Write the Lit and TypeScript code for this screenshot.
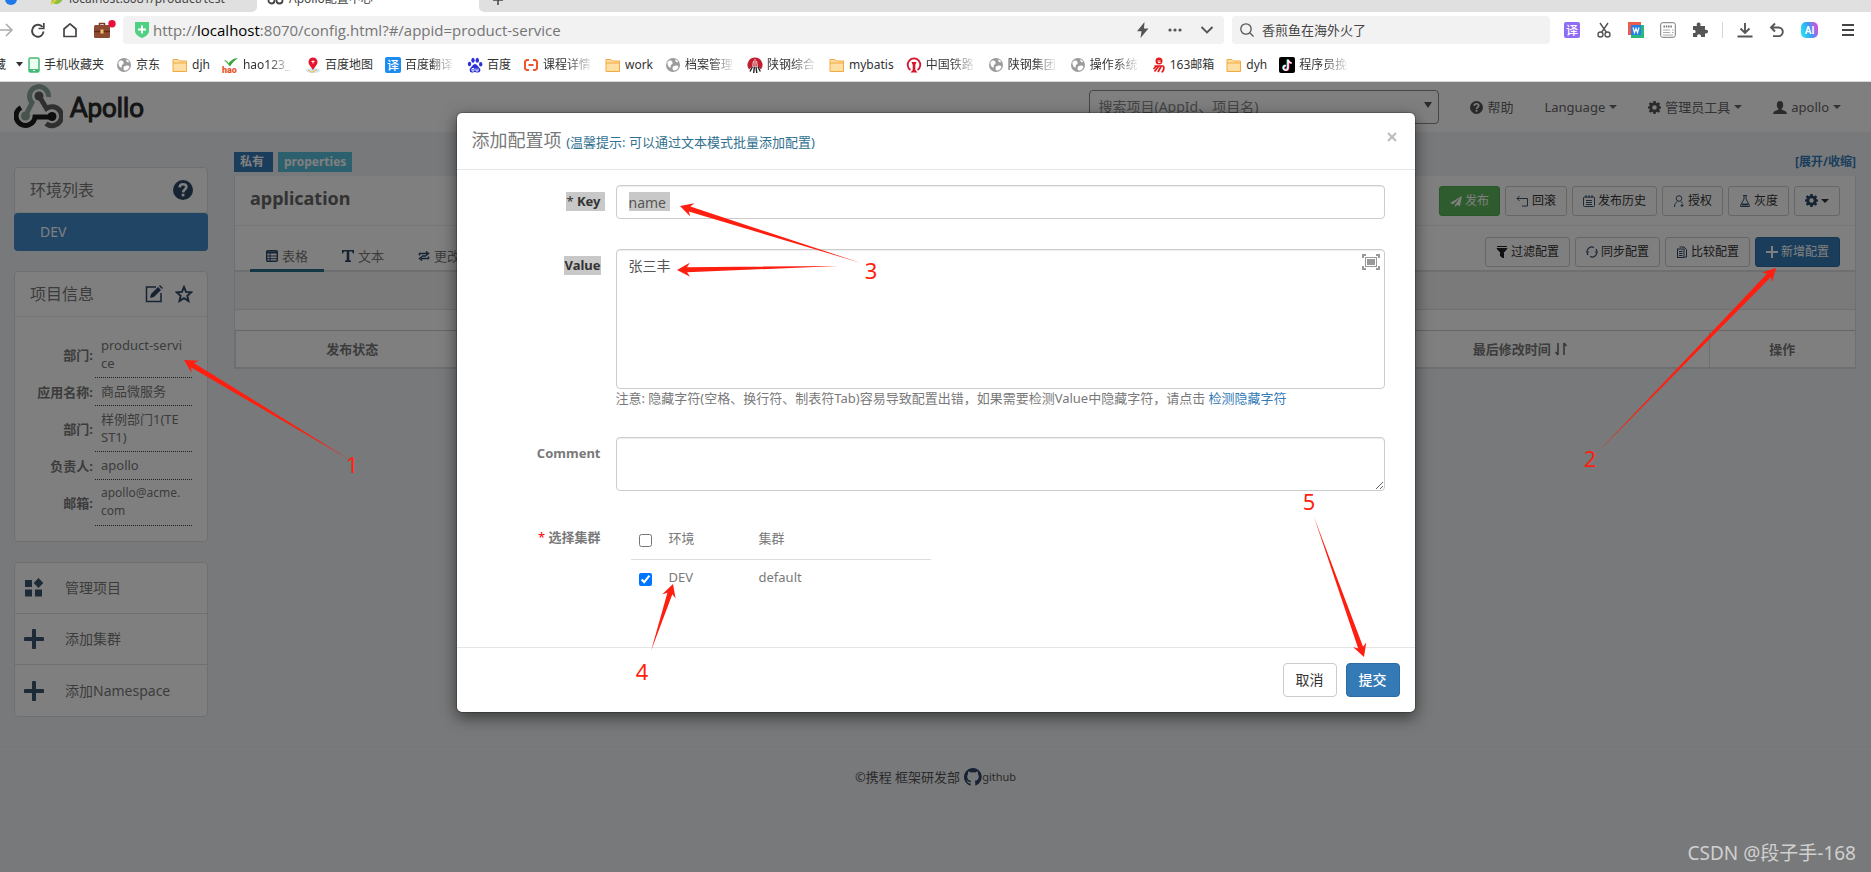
import { LitElement, html, css, svg } from "lit";
import { customElement } from "lit/decorators.js";

const base = css`
  * { box-sizing: border-box; }
  button, input, textarea, select { font: inherit; color: inherit; margin: 0; }
  button { background: none; border: 0; padding: 0; cursor: pointer; }
  a { text-decoration: none; color: inherit; }
  svg { display: block; flex: none; }
`;

/* ---------- icons ---------- */

const icon = (w: number, h: number, body: unknown, box = `0 0 ${w} ${h}`) =>
  html`<svg width=${w} height=${h} viewBox=${box} fill="none" aria-hidden="true">${body}</svg>`;

const folder = icon(16, 16, svg`<path d="M1 2.500h5l1.500 1.500H14.500v10.500H1z" fill="#ffdfa3" stroke="#f3a93c"/><path d="M1 6h13.500" stroke="#f3a93c"/>`);
const globe = icon(16, 16, svg`<circle cx="8" cy="8" r="7" fill="#9b9b9b"/><path d="M2.500 5c1.500-2.200 4.500-2 5 0s-.5 2-1.500 3 .5 2-.5 2.500S2 8.500 2.500 5zM8 9.500c2-1.500 4.800-1.500 5.300 0s-2 4-4 4-2-2.500-1.300-4zM10 2.500c1.500.3 2.700 1.200 3.200 2.500-1 .8-2.700.3-3.200-2.500z" fill="#fff"/>`);
const phone = icon(12, 16, svg`<rect x="1" y="1" width="10" height="14" rx="1.500" fill="#eafff0" stroke="#45b976" stroke-width="1.500"/><path d="M1 12h10v3H1z" fill="#45b976"/><path d="M5 13.500h2" stroke="#fff"/>`);
const hao = icon(17, 16, svg`<path d="M2 3c2 0 3.500 1.500 4.500 3.500C8 4 12 1 16 1c-3 2-6 5-8 8.500C6 7 4 5 2 3z" fill="#3aa537"/><text x="0" y="16" font-family="Roboto" font-weight="900" font-size="9" fill="#e8562a">hao</text>`);
const pin = icon(16, 16, svg`<ellipse cx="8" cy="13.500" rx="7" ry="2.500" fill="#cfe6f5"/><path d="M3 13l4 2.500 5-3" stroke="#f3b93c"/><path d="M8 13.500C7 10 3.500 8.500 3.500 5a4.500 4.500 0 019 0C12.500 8.500 9 10 8 13.500z" fill="#e8142c"/><path d="M6.500 4.500h3M8 3.500v3" stroke="#fff"/>`);
const yi = (w: number, c: string) => icon(w, 16, svg`<rect width=${w} height="16" rx="2" fill=${c}/><text x=${w / 2} y="12.500" text-anchor="middle" font-family="Noto Sans CJK SC" font-weight="500" font-size="12" fill="#fff">译</text>`);
const paw = icon(16, 16, svg`<g fill="#2a32d8"><ellipse cx="2.500" cy="7" rx="1.700" ry="2.300"/><ellipse cx="6" cy="3.200" rx="1.700" ry="2.500"/><ellipse cx="10.300" cy="3.200" rx="1.700" ry="2.500"/><ellipse cx="13.700" cy="7.200" rx="1.700" ry="2.300"/><path d="M8 7c2 0 3 2.500 4.500 4S13.500 15.500 11 15.500 9 15 8 15s-1 .5-3.200.5S2 12.500 3.500 11 6 7 8 7z"/></g><path d="M5 11.500h2v2.500H5zM9 11.500V14h2v-2.500" stroke="#fff" stroke-width=".9"/>`);
const bracket = icon(16, 16, svg`<path d="M6 3H3.500L2 4.500v7L3.500 13H6M10 3h2.500L14 4.500v7L12.500 13H10M5.500 8h5" stroke="#f0562b" stroke-width="2"/>`);
const mill = icon(16, 16, svg`<path d="M8 .5a7.500 7.500 0 016 12L10.500 9 8 10 5.500 9 2 12.500A7.500 7.500 0 018 .5z" fill="#c21f2e"/><path d="M8 2v8M6.500 4l-1 6M9.500 4l1 6" stroke="#fff" stroke-width=".8"/><path d="M7.300 10l-.6 6M9 10l.8 6M5.500 9.500L3 14.500M10.800 9.500l2.500 5" stroke="#222" stroke-width="1.400"/>`);
const rail = icon(16, 16, svg`<path d="M4.500 13A6.300 6.300 0 1111.500 13" stroke="#d7142c" stroke-width="1.800"/><path d="M5.500 5h5L9.300 8v5l2.200 2.500h-7L6.700 13V8z" fill="#d7142c"/>`);
const yi163 = icon(14, 16, svg`<circle cx="7" cy="4" r="3.500" fill="#e21a1a"/><path d="M5.500 4h3M6 5.500h2.500" stroke="#fff"/><path d="M2.500 9h8.500c1.500 0 1 5.500-1.500 6M5 8.500L1.500 12M6.500 9.500l-4 5M9 9.500l-3 5.500" stroke="#e21a1a" stroke-width="1.700"/>`);
const tik = icon(16, 16, svg`<rect width="16" height="16" rx="2" fill="#000"/><path d="M8.500 2.500v8a2.200 2.200 0 11-2.200-2.200" stroke="#25f4ee" stroke-width="1.800"/><path d="M9.500 3v8a2.200 2.200 0 11-2.200-2.200M9.500 3c.3 2 1.500 3 3.500 3.200" stroke="#fe2c55" stroke-width="1.800"/><path d="M9 2.500v8.300a2.300 2.300 0 11-2.200-2.200M9 2.500c.3 2 1.500 3.200 3.500 3.400" stroke="#fff" stroke-width="1.500"/>`);

const gear = (s: number, c: string) => icon(s, s, svg`<path fill=${c} fill-rule="evenodd" d="M6.600 0h2.800l.4 2.200 1.300.5L13 1.500l2 2-1.300 1.800.5 1.300 1.800.3v2.200l-1.800.4-.5 1.300L15 12.600l-2 2-1.900-1.300-1.300.5-.4 2.200H6.600l-.4-2.200-1.300-.5L3 14.600l-2-2 1.300-1.900-.5-1.300L0 9.100V6.900l1.800-.3.5-1.300L1 3.500l2-2 1.900 1.200 1.300-.5zM8 5.200a2.800 2.800 0 100 5.600 2.800 2.800 0 000-5.600z"/>`, "0 0 16 16");
const help = (s: number, c: string, m: string) => icon(s, s, svg`<circle cx="10" cy="10" r="10" fill=${c}/><path d="M6.600 7.400C6.800 5 8.300 4.200 10.100 4.200c2 0 3.300 1.200 3.300 2.900 0 2.500-3.200 2.300-3.300 5.300" stroke=${m} stroke-width="2.600"/><rect x="8.700" y="13.700" width="2.700" height="2.700" fill=${m}/>`, "0 0 20 20");
const caret = html`<svg width="8" height="4" viewBox="0 0 8 4" aria-hidden="true"><path d="M0 0h8L4 4z" fill="currentColor"/></svg>`;

/* ---------- browser frame ---------- */

const bookmarks: [unknown, string, boolean?][] = [
  [phone, "手机收藏夹"], [globe, "京东"], [folder, "djh"], [hao, "hao123_", true], [pin, "百度地图"],
  [yi(16, "#1c8cf0"), "百度翻译", true], [paw, "百度"], [bracket, "课程详情", true], [folder, "work"],
  [globe, "档案管理", true], [mill, "陕钢综合", true], [folder, "mybatis"], [rail, "中国铁路", true],
  [globe, "陕钢集团", true], [globe, "操作系统", true], [yi163, "163邮箱"], [folder, "dyh"], [tik, "程序员挽", true],
];

@customElement("browser-chrome")
class BrowserChrome extends LitElement {
  static styles = [base, css`
    :host { display: block; background: #fff; border-bottom: 1px solid #d9d9d9; color: #333; font-size: 12px; }
    .tabs { display: flex; height: 12px; background: #fff; overflow: hidden; }
    .tab { display: flex; align-items: flex-end; height: 12px; background: #e0e0e0; font-size: 12px; line-height: 17px; gap: 5px; white-space: nowrap; color: #444; }
    .tab svg { margin-bottom: 7px; }
    .tab span { margin-bottom: 5px; }
    .first { width: 257px; padding-left: 5px; border-bottom-right-radius: 5px; }
    .first .leaf { margin-left: 28px; }
    .active { width: 222px; background: #fff; padding-left: 10px; }
    .rest { flex: 1; border-bottom-left-radius: 5px; padding-left: 14px; }
    .bar { display: flex; align-items: center; height: 36px; padding: 0 15px 0 0; }
    .nav { display: flex; align-items: center; width: 123px; gap: 16px; }
    .url, .search { display: flex; align-items: center; height: 28px; background: #f2f2f2; border-radius: 4px; }
    .url { flex: 1; padding: 0 10px 0 12px; gap: 4px; }
    .addr { flex: 1; font-family: "Open Sans", sans-serif; font-size: 15px; color: #757575; }
    .addr b { font-weight: 400; color: #000; }
    .acts { display: flex; align-items: center; gap: 18px; }
    .search { flex: none; width: 318px; margin-left: 8px; padding: 0 8px; gap: 8px; }
    .search input { flex: 1; min-width: 0; border: 0; background: none; outline: 0; font-size: 13px; padding: 0; color: #444; }
    .search input::placeholder { color: #444; opacity: 1; }
    .ext { display: flex; align-items: center; gap: 16px; padding-left: 14px; }
    .rule { width: 1px; height: 16px; background: #d5d5d5; margin: 0 -2px; }
    .ext .menu { margin-left: 6px; }
    .marks { display: flex; align-items: center; height: 33px; gap: 12px; line-height: 16px; white-space: nowrap; overflow: hidden; }
    .lead { display: flex; align-items: center; gap: 10px; margin-right: -8px; }
    .lead span { display: flex; justify-content: flex-end; width: 6px; overflow: hidden; }
    .mark { display: flex; align-items: center; gap: 4px; flex: none; }
    .fade { width: 50px; overflow: hidden; mask-image: linear-gradient(90deg, #000 50%, transparent 100%); }
  `];

  render() {
    const s = "#555";
    return html`
      <div class="tabs">
        <div class="tab first">
          ${icon(12, 12, svg`<circle cx="6" cy="6" r="6" fill="#2178e8"/>`)}
          <svg class="leaf" width="14" height="12" viewBox="0 0 14 12" aria-hidden="true"><path d="M1 9C4 3 9 0 14 0c0 7-4 12-9 11z" fill="#8bbf3f"/><path d="M1 11l8-7" stroke="#e3cf3a" stroke-width="2"/></svg>
          <span>localhost:8081/product/test</span>
        </div>
        <div class="tab active">
          ${icon(17, 12, svg`<circle cx="4.500" cy="7.500" r="3" stroke="#444" stroke-width="1.800"/><circle cx="12.500" cy="7.500" r="3" stroke="#444" stroke-width="1.800"/>`)}
          <span>Apollo配置中心</span>
        </div>
        <div class="tab rest">${icon(10, 10, svg`<path d="M5 0v10M0 5h10" stroke="#444" stroke-width="1.500"/>`)}</div>
      </div>
      <div class="bar">
        <div class="nav">
          ${icon(14, 16, svg`<path d="M0 8h12M6 2l6 6-6 6" stroke="#aaa" stroke-width="1.500"/>`)}
          ${icon(16, 16, svg`<path d="M13.500 9.500A5.700 5.700 0 112.500 7 5.700 5.700 0 0112.500 5" stroke="#444" stroke-width="1.900"/><path d="M13.800 1v5.500H8.500" stroke="#444" stroke-width="1.700"/>`)}
          ${icon(16, 16, svg`<path d="M2 7l6-5.200L14 7v7.500H2z" stroke="#444" stroke-width="1.700" stroke-linejoin="round"/>`)}
          ${icon(22, 20, svg`<path d="M5.500 5.500V3.500h5v2" stroke="#7a3b26" stroke-width="1.500"/><rect x="0" y="5" width="16" height="13" rx="1.500" fill="#8d4a33"/><path d="M0 11.500h16" stroke="#5d2a1c" stroke-width="1.500"/><rect x="6.500" y="9.500" width="3" height="4" fill="#f0c36b"/><circle cx="18" cy="3.700" r="3.700" fill="#e9103a"/>`)}
        </div>
        <div class="url">
          ${icon(14, 16, svg`<path d="M0 0h14v9c0 3.500-3.500 5.500-7 7-3.500-1.500-7-3.500-7-7z" fill="#4fd183"/><path d="M7 3.500v8M3 7.500h8" stroke="#fff" stroke-width="2"/>`)}
          <span class="addr">http://<b>localhost</b>:8070/config.html?#/appid=product-service</span>
          <div class="acts">
            ${icon(14, 16, svg`<path d="M8.500 0L1 9.200h4.500L4.500 16 12.500 6.500H8z" fill=${s}/>`)}
            ${icon(14, 4, svg`<circle cx="2" cy="2" r="1.600" fill=${s}/><circle cx="7" cy="2" r="1.600" fill=${s}/><circle cx="12" cy="2" r="1.600" fill=${s}/>`)}
            ${icon(14, 8, svg`<path d="M1.500 1l5.500 5.500L12.500 1" stroke=${s} stroke-width="1.900"/>`)}
          </div>
        </div>
        <label class="search">
          ${icon(14, 14, svg`<circle cx="6" cy="6" r="5.200" stroke="#555" stroke-width="1.300"/><path d="M10 10l3.500 3.500" stroke="#555" stroke-width="1.300"/>`)}
          <input aria-label="搜索" placeholder="香煎鱼在海外火了" />
        </label>
        <div class="ext">
          ${yi(16, "#8f6cf5")}
          ${icon(16, 16, svg`<circle cx="4.500" cy="12.500" r="2.500" stroke=${s} stroke-width="1.400"/><circle cx="11.500" cy="12.500" r="2.500" stroke=${s} stroke-width="1.400"/><path d="M4 1l6.500 9.500M12 1L5.500 10.500" stroke=${s} stroke-width="1.400"/>`)}
          ${icon(16, 16, svg`<path d="M0 0h13v13H0z" fill="#ea5d4b"/><path d="M3 3h13v13H3z" fill="#27b77c"/><path d="M3 3h10v10H3z" fill="#2680eb"/><path d="M5 5.500l1.500 5L8 6.500l1.500 4 1.500-5" stroke="#fff" stroke-width="1.200"/>`)}
          ${icon(16, 16, svg`<rect x=".7" y=".7" width="14.600" height="14.600" rx="2" stroke="#777"/><path d="M3.500 4.500h9" stroke="#777" stroke-width="2" stroke-dasharray="1.500 .8"/><path d="M3 8h7M3 10.500h7M3 13h10M12 8h1.500M12 10.500h1.500" stroke="#aaa"/>`)}
          ${icon(16, 16, svg`<path d="M1 4h4c-.8-2 0-3.500 1.700-3.500S9 2 8.300 4H13v4c2-.7 3 .2 3 1.600s-1 2.400-3 1.600V15H9c.3-1.800-.7-2.700-2-2.700S4.800 13.200 5.200 15H1v-4c2 .4 2.600-.4 2.600-1.500S3 7.700 1 8z" fill=${s}/>`)}
          <span class="rule"></span>
          ${icon(16, 16, svg`<path d="M8 1v9.500M3.500 6.500L8 11l4.500-4.500M.5 14.500h15" stroke=${s} stroke-width="1.900"/>`)}
          ${icon(16, 16, svg`<path d="M6 1.500L2 5.500l4 4M2 5.500h7.500a4.300 4.300 0 010 8.600H4" stroke=${s} stroke-width="1.900"/>`)}
          <svg width="17" height="16" viewBox="0 0 17 16" aria-hidden="true"><defs><linearGradient id="ai" x1="0" y1=".6" x2="1" y2=".3"><stop offset="0" stop-color="#24e0f0"/><stop offset=".5" stop-color="#3a9df5"/><stop offset="1" stop-color="#e04ad8"/></linearGradient></defs><rect width="17" height="16" rx="5" fill="url(#ai)"/><text x="8.500" y="12" font-family="Roboto" font-weight="700" font-size="10" text-anchor="middle" fill="#fff">AI</text></svg>
          <svg class="menu" width="16" height="14" viewBox="0 0 16 14" aria-hidden="true"><path d="M2 2h12M2 7h12M2 12h12" stroke="#444" stroke-width="1.800"/></svg>
        </div>
      </div>
      <nav class="marks">
        <a class="lead" href="#"><span>藏</span>${icon(8, 5, svg`<path d="M0 0h7L3.500 4.500z" fill="#333"/>`)}</a>
        ${bookmarks.map(([i, t, f]) => html`<a class="mark" href="#">${i}<span class=${f ? "fade" : ""}>${t}</span></a>`)}
      </nav>`;
  }
}

/* ---------- portal page behind the dialog ---------- */

@customElement("portal-page")
class PortalPage extends LitElement {
  static styles = [base, css`
    :host { display: block; background: #f1f2f5; color: #797979; font-size: 13px; line-height: 18px; }
    .top { display: flex; align-items: center; height: 50px; background: #fff; padding: 0 30px 0 14px; gap: 31px; border-radius: 0 0 3px 3px; }
    .brand { display: flex; align-items: center; gap: 7px; flex: 1; font-family: Lato, sans-serif; font-size: 26px; line-height: 32px; color: #2a2a2a; -webkit-text-stroke: 1px #2a2a2a; }
    .find { display: flex; align-items: center; width: 350px; height: 34px; border: 1px solid #8a8a8a; border-radius: 4px; padding: 0 6px 0 8px; }
    .find svg { margin-bottom: 5px; }
    .find input { flex: 1; border: 0; outline: 0; background: none; font-size: 14px; padding: 0; }
    .find input::placeholder { color: #8a8a8a; opacity: 1; }
    .link { display: flex; align-items: center; gap: 4px; color: #666; }
    .body { display: grid; grid-template-columns: 194px minmax(0, 1fr); gap: 26px; padding: 20px 15px 0 14px; align-items: start; }
    .side { display: grid; gap: 20px; padding-top: 15px; }
    .panel { background: #fff; border: 1px solid #dcdfe3; border-radius: 4px; }
    .head { display: flex; align-items: center; gap: 12px; height: 45px; padding: 0 14px 0 15px; border-bottom: 1px solid #e9ebee; font-size: 16px; color: #797979; }
    .head span { flex: 1; }
    .env { display: block; margin: 0 -1px -1px; height: 38px; line-height: 38px; padding-left: 26px; border-radius: 4px; background: #428bca; color: #fff; font-size: 14px; }
    .info { width: 100%; border-collapse: collapse; table-layout: fixed; }
    .wrap { padding: 15px 15px 15px 14px; }
    .info th { width: 66px; text-align: right; padding: 5px 2px 5px 0; white-space: nowrap; color: #797979; }
    .info td { padding: 4px 8px 5px 6px; word-break: break-all; border-bottom: 1px dotted #444; }
    .info tr:last-child td { font-size: 12px; }
    .menu a { display: flex; align-items: center; gap: 21px; height: 51px; padding-left: 9px; font-size: 14px; border-bottom: 1px solid #dcdfe3; }
    .menu a:last-child { border-bottom: 0; }
    .line { display: flex; align-items: center; height: 24px; gap: 5px; padding-bottom: 4px; font-size: 12px; font-weight: 700; }
    .tag { height: 20px; line-height: 20px; padding: 0 9px 0 6px; background: #337ab7; color: #fff; }
    .tag.cyan { background: #5bc0de; padding: 0 6px; }
    .toggle { margin-left: auto; color: #337ab7; }
    .box { background: #fff; border: 1px solid #dcdfe3; border-top: 0; border-bottom-width: 2px; }
    .row { display: flex; align-items: center; justify-content: space-between; padding: 0 15px; }
    .title { height: 50px; border-bottom: 1px solid #eceef0; }
    .title h2 { margin: 0 0 5px; font-size: 18px; line-height: 24px; color: #666; }
    .btns { display: flex; gap: 5px; }
    .btn { display: flex; align-items: center; gap: 3px; height: 30px; padding: 0 10px; border: 1px solid #ccc; border-radius: 3px; font-size: 12px; color: #333; background: #fff; }
    .green { background: #5cb85c; border-color: #4cae4c; color: #fff; }
    .blue { background: #337ab7; border-color: #2e6da4; color: #fff; }
    .bar { height: 46px; border-bottom: 2px solid #dcdfe3; align-items: flex-start; }
    .bar .btns { padding-top: 11px; }
    .tabs { display: flex; gap: 2px; height: 46px; align-items: flex-end; }
    .tab { display: flex; align-items: center; gap: 4px; height: 30px; padding: 0 16px; border-bottom: 3px solid transparent; }
    .tab.on { border-color: #2b6f86; }
    .strip { height: 38px; background: #f5f5f5; border-bottom: 1px solid #dcdfe3; margin-bottom: 20px; }
    .list { width: 100%; border-collapse: collapse; table-layout: fixed; border-top: 1px solid #ccc; }
    .list th { height: 36px; padding: 0; text-align: center; border-left: 1px solid #dcdfe3; }
    .list th:first-child { width: 233px; }
    .list th:nth-child(3) { width: 378px; }
    .list th:nth-child(2), .list th:nth-child(3) { border-left: 0; }
    .list th:last-child { width: 146px; }
    .sort { display: inline-block; vertical-align: -2px; margin-left: 4px; }
    .foot { display: flex; align-items: center; justify-content: center; gap: 4px; margin-top: 29px; padding-top: 17px; height: 44px; border-top: 1px solid #ebedf0; color: #555; }
    .foot a { display: flex; align-items: center; font-size: 11px; }
  `];

  render() {
    const d = "#3b5470";
    const n = "#2c4766";
    const plus = icon(20, 20, svg`<path d="M10 1.500v17M1.500 10h17" stroke=${d} stroke-width="4" stroke-linecap="round"/>`);
    const info: [string, string][] = [
      ["部门:", "product-service"], ["应用名称:", "商品微服务"], ["部门:", "样例部门1(TEST1)"], ["负责人:", "apollo"], ["邮箱:", "apollo@acme.com"],
    ];
    return html`
      <header class="top">
        <a class="brand" href="#">
          ${icon(49, 46, svg`
            <g stroke-width="5">
              <path d="M34.500 13A9.500 9.500 0 1018 18.500L11.500 32" stroke="#8da99b"/>
              <path d="M25 12L32.500 24.500A9.500 9.500 0 1132 39.500" stroke="#5e5e5e"/>
              <path d="M7 23.600A9.500 9.500 0 1021 33H38" stroke="#1c1c1c"/>
            </g>
            <circle cx="25" cy="12" r="4.500" fill="#5e5e5e"/><circle cx="11.500" cy="32" r="4.500" fill="#8da99b"/><circle cx="38" cy="32.500" r="4.500" fill="#1c1c1c"/>`)}
          <span>Apollo</span>
        </a>
        <label class="find"><input aria-label="搜索项目" placeholder="搜索项目(AppId、项目名)" />${icon(8, 6, svg`<path d="M0 0h8L4 6z" fill="#555"/>`)}</label>
        <a class="link" href="#">${help(13, "#555", "#fff")}帮助</a>
        <a class="link" href="#">Language${caret}</a>
        <a class="link" href="#">${gear(13, "#555")}管理员工具 ${caret}</a>
        <a class="link" href="#">${icon(14, 13, svg`<ellipse cx="7" cy="4" rx="3.200" ry="4" fill="#555"/><path d="M5.500 6h3v2.500l4.500 2 1 2.500H0l1-2.500 4.500-2z" fill="#555"/>`)}apollo ${caret}</a>
      </header>
      <div class="body">
        <aside class="side">
          <section class="panel">
            <div class="head"><span>环境列表</span>${help(20, n, "#fff")}</div>
            <a class="env" href="#">DEV</a>
          </section>
          <section class="panel">
            <div class="head"><span>项目信息</span>
              ${icon(18, 18, svg`<path d="M11 2H1.500v14.500H16V8" stroke=${n} stroke-width="1.500"/><path d="M5 13l1-4 7-7 3 3-7 7z" fill=${n}/><path d="M14 1l1-1 3 3-1 1z" fill=${n}/>`)}
              ${icon(18, 18, svg`<path d="M9 2l2 4.900 5.300.4-4 3.500 1.200 5.200L9 13.200 4.500 16l1.200-5.200-4-3.500L7 6.900z" stroke=${n} stroke-width="1.900"/>`)}
            </div>
            <div class="wrap"><table class="info">${info.map(([k, v]) => html`<tr><th>${k}</th><td>${v}</td></tr>`)}</table></div>
          </section>
          <nav class="panel menu">
            <a href="#">${icon(20, 20, svg`<path d="M1 2h7v7H1zM1 11.500h7v7H1zM11 11.500h7v7h-7zM14.500 0l4.800 5-4.800 5-4.800-5z" fill=${d}/>`)}管理项目</a>
            <a href="#">${plus}添加集群</a>
            <a href="#">${plus}添加Namespace</a>
          </nav>
        </aside>
        <main>
          <div class="line"><span class="tag">私有</span><span class="tag cyan">properties</span><a class="toggle" href="#">[展开/收缩]</a></div>
          <section class="box">
            <div class="row title"><h2>application</h2>
              <div class="btns">
                <button class="btn green">${icon(12, 12, svg`<path d="M12 1L0 8l3 1.200L10 3 5 10v2l2-2 3 1z" fill="#fff"/>`)}发布</button>
                <button class="btn">${icon(13, 12, svg`<path d="M1 3.500h10.500V11H6M3.500 1L1 3.500 3.500 6" stroke=${d}/>`)}回滚</button>
                <button class="btn">${icon(12, 12, svg`<rect x=".5" y="2" width="11" height="9.500" rx="1" stroke=${d}/><path d="M3 0v3M6 0v3M9 0v3M3 5.500h6M3 7.500h6M3 9.500h6" stroke=${d}/>`)}发布历史</button>
                <button class="btn">${icon(12, 12, svg`<circle cx="6" cy="3.500" r="2.800" stroke=${d}/><path d="M1.500 12c0-3 1.500-4.500 3-5.700M8 6.500l1.500 2M7.500 10.500h3M9 9v3" stroke=${d}/>`)}授权</button>
                <button class="btn">${icon(12, 12, svg`<path d="M4 .5h4M5 .5V4L1.500 10.500v1h9v-1L7 4V.5" stroke=${d}/><path d="M2.500 8.500h7v2h-7z" fill=${d}/>`)}灰度</button>
                <button class="btn" aria-label="设置">${gear(13, n)}${caret}</button>
              </div>
            </div>
            <div class="row bar">
              <div class="tabs">
                <a class="tab on" href="#">${icon(12, 12, svg`<rect x=".7" y=".7" width="10.600" height="10.600" rx="1" stroke=${n} stroke-width="1.400"/><path d="M1 2.500h10" stroke=${n} stroke-width="2"/><path d="M1 6h10M1 8.700h10M4 3v8" stroke=${n}/>`)}表格</a>
                <a class="tab" href="#">${icon(12, 12, svg`<path d="M0 0h12v3.500h-1L10 1.500H7.300V10l1.700.8V12H3v-1.200L4.700 10V1.500H2L1 3.500H0z" fill=${n}/>`)}文本</a>
                <a class="tab" href="#">${icon(12, 12, svg`<path d="M1.500 5.500V3.500H9M8 1.500l2.500 2L8 5.500M10.500 6.500v2H3M4 6.500l-2.500 2 2.500 2M4 6h4" stroke=${n} stroke-width="1.500"/>`)}更改历史</a>
              </div>
              <div class="btns">
                <button class="btn">${icon(12, 12, svg`<path d="M1 .5h10M1 2.500h10L7.500 6.500V12L4.500 10V6.500z" fill="#222" stroke="#222"/>`)}过滤配置</button>
                <button class="btn">${icon(12, 12, svg`<path d="M2.200 9A4.800 4.800 0 018 1.600M9.800 3A4.800 4.800 0 014 10.400" stroke=${d} stroke-width="1.200"/><path d="M10.800 6h-2M1.200 6h2" stroke=${d}/>`)}同步配置</button>
                <button class="btn">${icon(12, 12, svg`<rect x="1.500" y="3" width="6.500" height="8.500" stroke=${n}/><path d="M3.500 1h4.500L10.500 3.500V11H8.500M3 5.500h3.500M3 7.500h3.500M3 9.500h3.500" stroke=${n}/>`)}比较配置</button>
                <button class="btn blue">${icon(12, 12, svg`<path d="M6 0v12M0 6h12" stroke="#fff" stroke-width="2"/>`)}新增配置</button>
              </div>
            </div>
            <div class="strip"></div>
            <table class="list"><tr>
              <th>发布状态</th><th></th>
              <th>最后修改时间<svg class="sort" width="12" height="14" viewBox="0 0 12 14" fill="none" aria-hidden="true"><path d="M3 1v12M.5 10L3 13M9 13V1M9 1l2.500 3" stroke="#666" stroke-width="1.500"/></svg></th>
              <th>操作</th>
            </tr></table>
          </section>
        </main>
      </div>
      <footer class="foot"><span>©携程 框架研发部</span>
        <a href="#">${icon(18, 18, svg`<path fill=${n} d="M8 0C3.600 0 0 3.600 0 8c0 3.500 2.300 6.500 5.500 7.600.4.100.5-.2.500-.4v-1.500c-2.200.5-2.700-1-2.700-1-.4-1-.9-1.200-.9-1.200-.7-.5.1-.5.1-.5.800.1 1.200.8 1.200.8.700 1.200 1.900.9 2.300.7.100-.5.300-.9.500-1.100-1.800-.2-3.600-.9-3.600-4 0-.9.300-1.600.8-2.100 0-.2-.3-1 .1-2.100 0 0 .7-.2 2.200.8a7.500 7.500 0 014 0c1.500-1 2.200-.8 2.200-.8.400 1.100.1 1.900.1 2.100.5.600.8 1.300.8 2.200 0 3.100-1.900 3.700-3.700 3.900.3.300.6.800.6 1.500v2.200c0 .2.100.5.500.4A8 8 0 008 0z"/>`, "0 0 16 16")}github</a>
      </footer>`;
  }
}

/* ---------- "add item" dialog ---------- */

@customElement("item-dialog")
class ItemDialog extends LitElement {
  static styles = [base, css`
    :host { display: block; color: #797979; font-size: 13px; line-height: 19px; background: #fff; border: 1px solid rgba(0, 0, 0, .2); border-radius: 6px; box-shadow: 0 5px 15px rgba(0, 0, 0, .5); background-clip: padding-box; }
    .head { display: flex; align-items: center; height: 57px; padding: 0 15px; border-bottom: 1px solid #e5e5e5; }
    .head h4 { flex: 1; margin: 0; font-weight: 400; font-size: 18px; line-height: 25px; }
    .head small { font-size: 13px; color: #31708f; }
    .close { width: 16px; height: 20px; margin-bottom: 8px; display: grid; place-items: center; }
    .form { display: grid; grid-template-columns: 144px minmax(0, 1fr); column-gap: 15px; row-gap: 30px; padding: 15px 30px 50px 0; }
    .label { text-align: right; font-weight: 700; padding-top: 7px; }
    .mark { background: #c8c8c8; color: #333; display: inline-block; }
    .mark.wide { padding-right: 4px; margin-right: -4px; }
    .thin { font-weight: 400; }
    .red { color: #f00; font-weight: 400; }
    .ctl { display: block; width: 100%; border: 1px solid #ccc; border-radius: 4px; padding: 6px 12px; font-size: 14px; line-height: 20px; color: #555; box-shadow: inset 0 1px 1px rgba(0, 0, 0, .075); outline: 0; background-color: #fff; }
    .key { height: 34px; background: linear-gradient(#c8c8c8, #c8c8c8) no-repeat 12px 6px / 41px 19px #fff; }
    .area { position: relative; }
    .value { height: 140px; resize: none; }
    .comment { height: 54px; resize: vertical; }
    .full { position: absolute; right: 5px; top: 5px; }
    .note { margin: 0; line-height: 18px; }
    .note a { color: #337ab7; }
    .grid { width: 300px; margin-left: 15px; border-collapse: collapse; table-layout: fixed; }
    .grid th, .grid td { height: 38px; padding: 0 8px 2px; text-align: left; font-weight: 400; }
    .grid th { border-bottom: 1px solid #ddd; }
    .grid .c1 { width: 30px; padding-right: 0; }
    .grid .c2 { width: 90px; }
    .grid input { display: block; width: 13px; height: 13px; margin-top: 4px; }
    .foot { display: flex; justify-content: flex-end; gap: 9px; padding: 15px; border-top: 1px solid #e5e5e5; }
    .btn { height: 34px; padding: 0 12px; border: 1px solid #ccc; border-radius: 4px; font-size: 14px; line-height: 20px; color: #333; background: #fff; }
    .go { background: #337ab7; border-color: #2e6da4; color: #fff; font-weight: 500; }
  `];

  render() {
    return html`
      <div class="head">
        <h4>添加配置项 <small>(温馨提示: 可以通过文本模式批量添加配置)</small></h4>
        <button class="close" aria-label="关闭">${icon(10, 10, svg`<path d="M1 1l8 8M9 1L1 9" stroke="#bbb" stroke-width="2"/>`)}</button>
      </div>
      <div class="form">
        <label class="label" for="key"><span class="mark wide"><span class="thin">*</span> Key</span></label>
        <input id="key" class="ctl key" value="name" />
        <label class="label" for="value"><span class="mark">Value</span></label>
        <div class="area">
          <textarea id="value" class="ctl value" .value=${"张三丰"}></textarea>
          <button class="full" aria-label="全屏">${icon(18, 16, svg`<path d="M1 4V1h3M14 1h3v3M1 12v3h3M14 15h3v-3" stroke="#999" stroke-width="2"/><rect x="3.500" y="3.500" width="11" height="9" stroke="#999"/><path d="M5 5h8v6H5z" fill="#999"/>`)}</button>
          <p class="note">注意: 隐藏字符(空格、换行符、制表符Tab)容易导致配置出错，如果需要检测Value中隐藏字符，请点击 <a href="#">检测隐藏字符</a></p>
        </div>
        <label class="label" for="comment">Comment</label>
        <textarea id="comment" class="ctl comment"></textarea>
        <span class="label"><span class="red">*</span> 选择集群</span>
        <table class="grid">
          <tr><th class="c1"><input type="checkbox" aria-label="全选" /></th><th class="c2">环境</th><th>集群</th></tr>
          <tr><td class="c1"><input type="checkbox" aria-label="DEV default" checked /></td><td class="c2">DEV</td><td>default</td></tr>
        </table>
      </div>
      <div class="foot"><button class="btn">取消</button><button class="btn go">提交</button></div>`;
  }
}

/* ---------- red step arrows ---------- */

const arrow = (x1: number, y1: number, x2: number, y2: number) => {
  const len = Math.hypot(x2 - x1, y2 - y1);
  const ux = (x2 - x1) / len, uy = (y2 - y1) / len;
  const p = (back: number, off: number) => `${x2 - ux * back - uy * off},${y2 - uy * back + ux * off}`;
  return svg`<polygon points=${[`${x1},${y1}`, p(10, 2.600), p(13, 7), p(0, 0), p(13, -7), p(10, -2.600)].join(" ")}/>`;
};

@customElement("app-root")
class AppRoot extends LitElement {
  static styles = [base, css`
    :host { display: flex; flex-direction: column; position: relative; min-height: 100vh; overflow: hidden; font-family: "Noto Sans", "Noto Sans CJK SC", sans-serif; }
    .stage { flex: 1; display: grid; position: relative; }
    .shade { position: absolute; inset: 0; background: rgba(0, 0, 0, .5); padding-top: 30px; }
    .dialog { width: 960px; max-width: 96%; margin: 0 auto; }
    .steps { position: absolute; inset: 0; pointer-events: none; fill: #ff1f10; font-size: 22px; text-anchor: middle; }
    .sign { position: absolute; right: 15px; bottom: 7px; color: #d0d0d0; font-size: 19px; line-height: 24px; }
  `];

  render() {
    return html`
      <browser-chrome></browser-chrome>
      <div class="stage">
        <portal-page></portal-page>
        <div class="shade"><item-dialog class="dialog" role="dialog"></item-dialog></div>
      </div>
      <svg class="steps" width="1871" height="872" viewBox="0 0 1871 872">
        ${arrow(350, 460, 184, 360)}${arrow(1596, 454, 1776, 268)}${arrow(861, 263, 680, 206)}
        ${arrow(838, 266, 677, 270)}${arrow(651, 651, 673, 584)}${arrow(1314, 517, 1364, 657)}
        <text x="352" y="473">1</text><text x="1590" y="467">2</text><text x="871" y="279">3</text>
        <text x="642" y="680">4</text><text x="1309" y="510">5</text>
      </svg>
      <div class="sign">CSDN @段子手-168</div>`;
  }
}
